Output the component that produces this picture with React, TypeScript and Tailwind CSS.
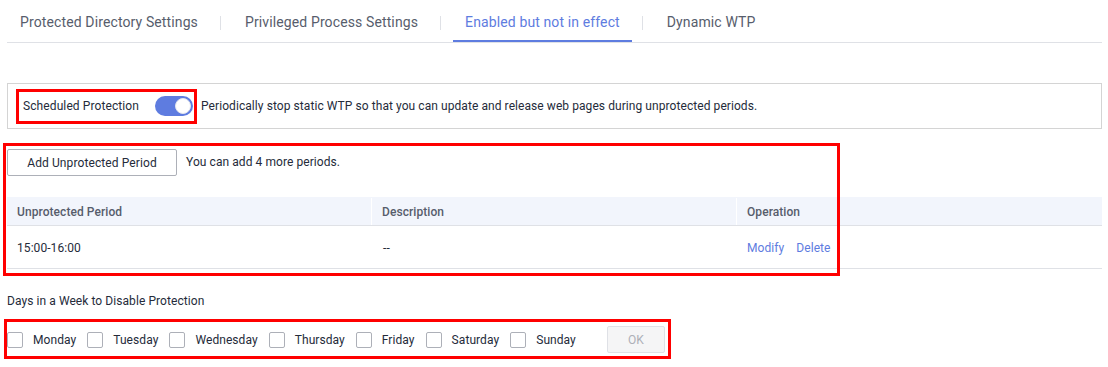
import React from "react";

const tabs = [
  "Protected Directory Settings",
  "Privileged Process Settings",
  "Enabled but not in effect",
  "Dynamic WTP",
];

const days = ["Monday", "Tuesday", "Wednesday", "Thursday", "Friday", "Saturday", "Sunday"];

export default function App() {
  return (
    <div
      className="relative w-[1108px] h-[367px] bg-white text-[12px] text-[#252b3a] tracking-[0.07px] overflow-hidden"
      style={{ fontFamily: "Roboto, 'Liberation Sans', sans-serif" }}
    >
      {/* Tabs */}
      <div className="ml-[7px] w-[1095px] h-[43px] flex items-center border-b border-[#dfe1e6] pl-px tracking-[0.12px]">
        {tabs.map((t, i) => (
          <React.Fragment key={t}>
            {i > 0 && <div className="w-px h-[14px] bg-[#dfe1e6] ml-[10px] mr-[12px] mt-[4px]" />}
            <div
              className={
                "relative h-[42px] px-3 flex items-center pt-[3px] text-[14px] " +
                (i === 2 ? "text-[#5e7ce0]" : "text-[#575d6c]")
              }
            >
              {t}
              {i === 2 && <div className="absolute left-0 right-0 bottom-0 h-[2px] bg-[#5e7ce0]" />}
            </div>
          </React.Fragment>
        ))}
      </div>

      {/* Info box */}
      <div className="mt-[40px] ml-[7px] w-[1095px] h-[46px] border border-[#d4d4d4] flex items-center pl-[8px]">
        <div className="h-[35px] border-[3px] border-[#ff0000] flex items-center pl-[4px] pr-[1px]">
          <span className="text-[#252b3a] tracking-[0.1px]">Scheduled Protection</span>
          <div className="ml-[16px] relative w-[38px] h-[20px] rounded-full bg-[#5e7ce0]">
            <div className="absolute right-[2px] top-[2px] w-[16px] h-[16px] rounded-full bg-white border border-[#e4e7ee]" />
          </div>
        </div>
        <span className="ml-[4px]">
          Periodically stop static WTP so that you can update and release web pages during unprotected periods.
        </span>
      </div>

      {/* Add period */}
      <div className="mt-[20px] ml-[7px] flex items-center">
        <button className="w-[170px] h-[27px] pt-[1px] border border-[#adb0b8] rounded-[2px] bg-white text-[12px] text-[#252b3a] tracking-[0.1px]">
          Add Unprotected Period
        </button>
        <span className="ml-[9px] -mt-[2px]">You can add 4 more periods.</span>
      </div>

      {/* Table */}
      <div className="mt-[21px] ml-[7px] w-[1095px]">
        <div className="h-[29px] pt-[1px] bg-[#f2f5fc] border-b border-[#dfe1e6] grid grid-cols-[365px_365px_365px] text-[#575d6c] font-medium">
          <div className="flex items-center pl-[10px] border-r border-white">Unprotected Period</div>
          <div className="flex items-center pl-[10px] border-r border-white">Description</div>
          <div className="flex items-center pl-[10px]">Operation</div>
        </div>
        <div className="h-[43px] pt-[1px] border-b border-[#dfe1e6] grid grid-cols-[365px_365px_365px]">
          <div className="flex items-center pl-[10px]">15:00-16:00</div>
          <div className="flex items-center pl-[11px]">--</div>
          <div className="flex items-center pl-[10px] text-[#5e7ce0]">
            <span>Modify</span>
            <span className="ml-[12px]">Delete</span>
          </div>
        </div>
      </div>

      {/* Days */}
      <div className="mt-[23px] ml-[7px] leading-[18px]">Days in a Week to Disable Protection</div>

      <div className="mt-[9px] ml-[4px] w-[667px] h-[40px] pt-[1px] border-[3px] border-[#ff0000] flex items-center pr-[3px]">
        {days.map((d) => (
          <div key={d} className="flex items-center mr-[11px]">
            <div className="w-[16px] h-[16px] border border-[#adb0b8] rounded-[2px] bg-white" />
            <span className="ml-[10px]">{d}</span>
          </div>
        ))}
        <button className="ml-auto w-[58px] h-[27px] border border-[#dfe1e6] rounded-[2px] bg-[#f5f5f6] text-[#adb0b8] text-[12px]">
          OK
        </button>
      </div>

      {/* Annotation overlay */}
      <div className="absolute left-[3px] top-[143px] w-[837px] h-[133px] border-[3px] border-[#ff0000] pointer-events-none" />
    </div>
  );
}
